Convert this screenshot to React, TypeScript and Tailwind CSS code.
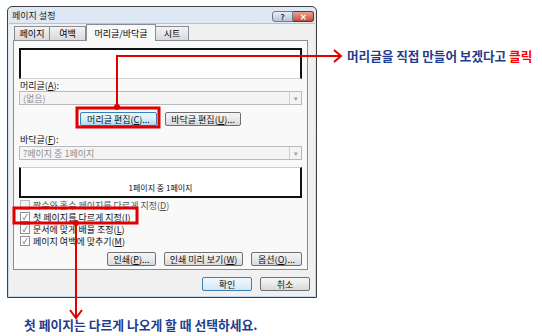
import React from "react";

const btn =
  "h-[14px] flex items-center justify-center border border-[#707070] rounded-[2px] bg-gradient-to-b from-[#f6f6f6] via-[#e9e9e9] to-[#d8d8d8] text-[9px] leading-none text-[#111]";

function Btn({ w, children, hot }: { w: string; children: React.ReactNode; hot?: boolean }) {
  return (
    <div
      className={
        hot
          ? `${w} h-[14px] flex items-center justify-center border border-[#3c7fb1] rounded-[2px] bg-gradient-to-b from-[#eaf6fd] via-[#d9f0fc] to-[#a7d9f5] text-[9px] leading-none text-[#111]`
          : `${w} ${btn}`
      }
    >
      {children}
    </div>
  );
}

function Combo({ text }: { text: string }) {
  return (
    <div className="mx-[5px] h-[14px] border border-[#b9b9b9] bg-[#f4f4f4] flex items-center">
      <span className="pl-[3px] text-[9px] leading-none text-[#8d8d8d] flex-1">{text}</span>
      <div className="w-[12px] h-[12px] border-l border-[#d0d0d0] flex items-center justify-center text-[7px] text-[#9a9a9a]">
        ▾
      </div>
    </div>
  );
}

function Check({ checked, children }: { checked?: boolean; children: React.ReactNode }) {
  return (
    <div className="h-[12px] flex items-center pl-[6px]">
      <div
        className={`w-[10px] h-[10px] border flex items-center justify-center text-[8px] leading-none ${
          checked ? "border-[#8e8f8f] bg-white text-[#3d54a0]" : "border-[#b8b8b8] bg-[#f2f2f2]"
        }`}
      >
        {checked ? "✓" : ""}
      </div>
      <span className="ml-[3px] text-[9px] leading-none text-[#111]">{children}</span>
    </div>
  );
}

function Dialog() {
  return (
    <div className="w-[310px] h-[292px] border border-[#404040] rounded-t-[5px] bg-gradient-to-b from-[#dfe9f5] to-[#c6d6e9] flex flex-col">
      <div className="h-[16px] flex items-center pl-[4px] pr-[2px]">
        <span className="text-[9px] leading-none text-[#1a1a1a] mt-[1px]">페이지 설정</span>
        <div className="ml-auto flex mt-[3px]">
          <div className="w-[21px] h-[11px] border border-[#6b7b91] rounded-l-[3px] bg-gradient-to-b from-[#e9eef5] to-[#b7c5d8] flex items-center justify-center text-[8px] font-bold leading-none text-[#333]">
            ?
          </div>
          <div className="w-[21px] h-[11px] border border-[#7a2b22] border-l-0 rounded-r-[3px] bg-gradient-to-b from-[#e8a493] to-[#c14c38] flex items-center justify-center text-[8px] font-bold leading-none text-white">
            ✕
          </div>
        </div>
      </div>
      <div className="flex-1 mx-[1px] mb-[1px] bg-[#f0f0f0] px-[4px] flex flex-col border-t border-[#b4c2d4]">
        <div className="h-[16px] flex items-end pl-[1px]">
          <div className="w-[36px] h-[14px] border border-b-0 border-[#898c95] bg-gradient-to-b from-[#f3f3f3] to-[#dadada] flex items-center justify-center text-[9px] leading-none">
            페이지
          </div>
          <div className="w-[36px] h-[14px] border border-b-0 border-l-0 border-[#898c95] bg-gradient-to-b from-[#f3f3f3] to-[#dadada] flex items-center justify-center text-[9px] leading-none">
            여백
          </div>
          <div className="w-[70px] h-[17px] -mb-px relative z-10 border border-b-0 border-[#898c95] bg-[#f9f9f9] flex items-center justify-center text-[9px] leading-none">
            머리글/바닥글
          </div>
          <div className="w-[33px] h-[14px] border border-b-0 border-l-0 border-[#898c95] bg-gradient-to-b from-[#f3f3f3] to-[#dadada] flex items-center justify-center text-[9px] leading-none">
            시트
          </div>
        </div>
        <div className="w-[295px] h-[230px] border border-[#898c95] bg-[#f9f9f9] flex flex-col">
          <div className="mx-[5px] mt-[7px] h-[31px] bg-white border-t-2 border-x-2 border-[#111] border-b border-b-[#cfcfcf]" />
          <div className="mt-[1px] h-[11px] pl-[6px] flex items-center text-[9px] leading-none text-[#111]">
            머리글(<u>A</u>):
          </div>
          <Combo text="(없음)" />
          <div className="mt-[7px] flex justify-center gap-[8px]">
            <Btn w="w-[77px]" hot>
              머리글 편집(<u>C</u>)...
            </Btn>
            <Btn w="w-[76px]">
              바닥글 편집(<u>U</u>)...
            </Btn>
          </div>
          <div className="mt-[8px] h-[10px] pl-[6px] flex items-center text-[9px] leading-none text-[#111]">
            바닥글(<u>F</u>):
          </div>
          <div className="mt-[2px]">
            <Combo text="?페이지 중 1페이지" />
          </div>
          <div className="mx-[5px] mt-[7px] h-[31px] bg-white border-b-2 border-x-2 border-[#111] border-t border-t-[#cfcfcf] flex items-end justify-center pb-[4px] text-[8px] leading-none text-[#111]">
            1페이지 중 1페이지
          </div>
          <div className="mt-[1px] flex flex-col">
            <Check>
              <span className="text-[#555]">
                짝수와 홀수 페이지를 다르게 지정(<u>D</u>)
              </span>
            </Check>
            <Check checked>
              첫 페이지를 다르게 지정(<u>I</u>)
            </Check>
            <Check checked>
              문서에 맞게 배율 조정(<u>L</u>)
            </Check>
            <Check checked>
              페이지 여백에 맞추기(<u>M</u>)
            </Check>
          </div>
          <div className="mt-[5px] flex justify-end gap-[8px] pr-[5px]">
            <Btn w="w-[49px]">
              인쇄(<u>P</u>)...
            </Btn>
            <Btn w="w-[79px]">
              인쇄 미리 보기(<u>W</u>)
            </Btn>
            <Btn w="w-[51px]">
              옵션(<u>O</u>)...
            </Btn>
          </div>
        </div>
        <div className="mt-[7px] flex justify-end gap-[8px] pr-[1px]">
          <div className="w-[50px] h-[14px] flex items-center justify-center border border-[#3c7fb1] rounded-[2px] bg-gradient-to-b from-[#f2f8fc] via-[#e5f1fa] to-[#cfe5f5] text-[9px] leading-none text-[#111]">
            확인
          </div>
          <Btn w="w-[50px]">취소</Btn>
        </div>
      </div>
    </div>
  );
}

export default function App() {
  return (
    <div className="relative w-[542px] h-[336px] bg-white overflow-hidden font-['Noto_Sans_CJK_KR','Noto_Sans',sans-serif]">
      <div className="pl-[7px] pt-[6px]">
        <Dialog />
      </div>
      <p className="mt-[21px] pl-[24px] text-[12.8px] leading-none font-bold text-[#1f3c8e] whitespace-nowrap">
        첫 페이지는 다르게 나오게 할 때 선택하세요.
      </p>
      <p className="absolute left-[347px] top-[50px] text-[12.6px] leading-none font-bold text-[#1f3c8e] whitespace-nowrap">
        머리글을 직접 만들어 보겠다고 <span className="text-[#ff0000]">클릭</span>
      </p>
      <svg className="absolute left-0 top-0 pointer-events-none" width="542" height="336" viewBox="0 0 542 336">
        <rect x="77" y="108" width="82" height="19" fill="none" stroke="#e00000" strokeWidth="3" />
        <rect x="14" y="208" width="123" height="15" fill="none" stroke="#e00000" strokeWidth="3" />
        <path d="M117 107 V56 H340" fill="none" stroke="#e00000" strokeWidth="2" />
        <polyline points="334,50 341,56 334,62" fill="none" stroke="#e00000" strokeWidth="2" />
        <circle cx="117" cy="107" r="3" fill="#e00000" />
        <path d="M76 223 V317" fill="none" stroke="#e00000" strokeWidth="2" />
        <polyline points="70,310 76,318 82,310" fill="none" stroke="#e00000" strokeWidth="2" />
        <circle cx="76" cy="223" r="3" fill="#e00000" />
      </svg>
    </div>
  );
}
